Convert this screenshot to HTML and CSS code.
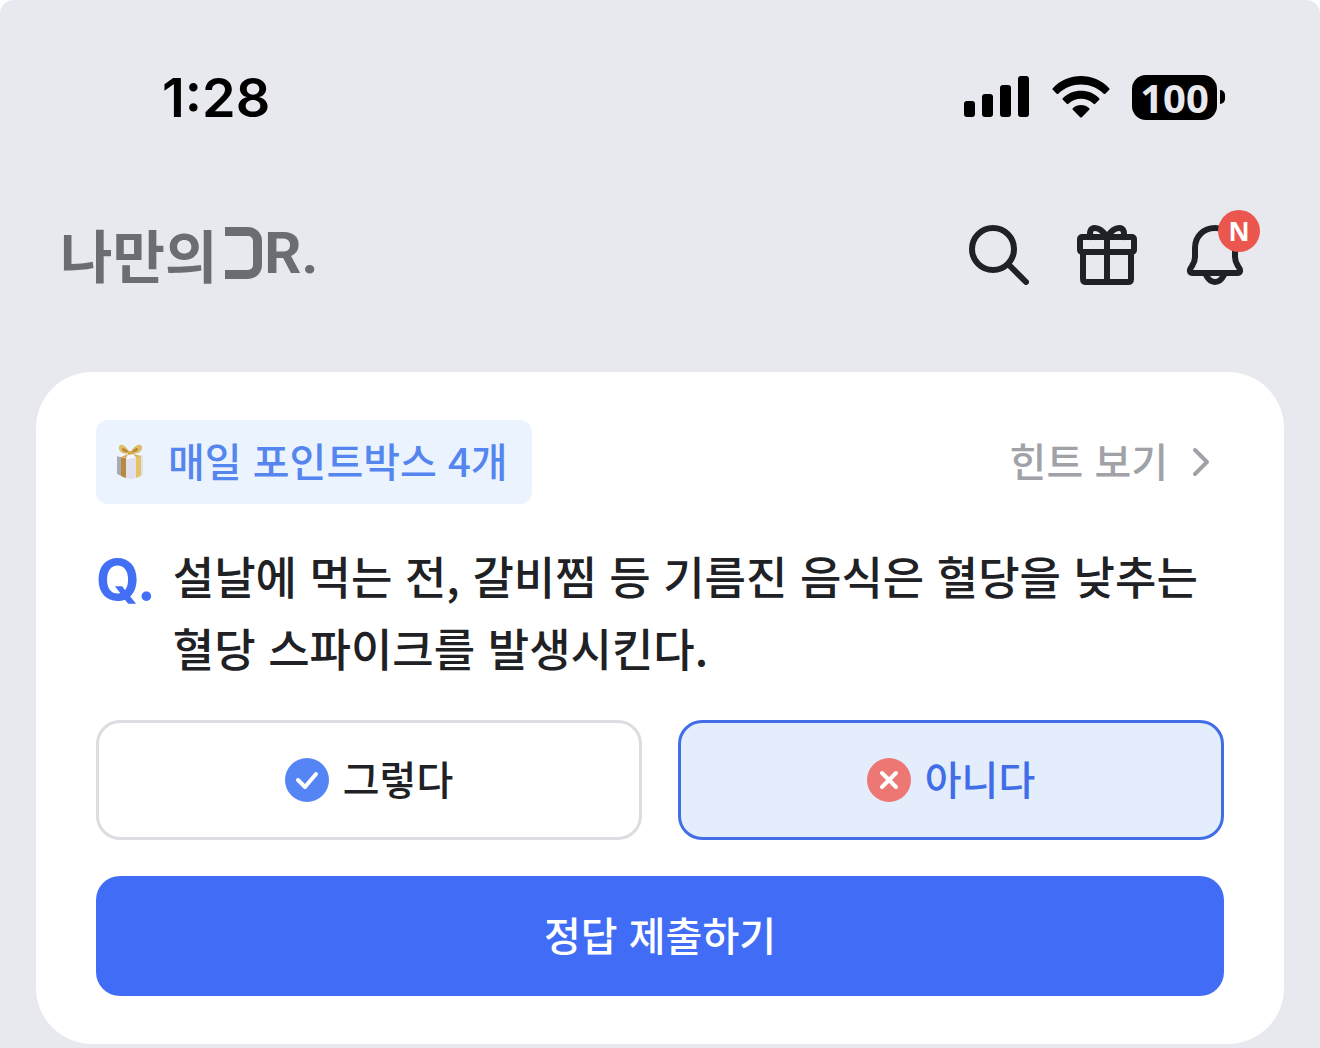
FILE: index.html
```html
<!DOCTYPE html>
<html lang="ko">
<head>
  <meta charset="UTF-8">
  <meta name="viewport" content="width=device-width, initial-scale=1.0">
  <title>나만의DR.</title>
  <link rel="stylesheet" href="styles.css">
</head>
<body>
  <div class="screen">
    <div class="status-bar">
      <time class="clock">1:28</time>
      <div class="status-icons">
        <svg class="signal" viewBox="0 0 66 42" aria-hidden="true">
          <rect x="0" y="25" width="11" height="16" rx="3"/>
          <rect x="18" y="18" width="11" height="23" rx="3"/>
          <rect x="36" y="9" width="11" height="32" rx="3"/>
          <rect x="54" y="0" width="11" height="41" rx="3"/>
        </svg>
        <svg class="wifi" viewBox="0 0 58 42" aria-hidden="true">
          <path d="M.8 12.2C16-4 42-4 57.2 12.2q.8.8 0 1.6l-3.9 3.9q-.8.8-1.6 0C39 5.500 19 5.500 6.300 17.700q-.8.8-1.600 0L.8 13.800q-.8-.8 0-1.600z"/>
          <path d="M10.800 22.200C20.500 12.300 37.500 12.300 47.200 22.200q.8.8 0 1.600l-4 4q-.8.8-1.600 0C34.500 21 23.500 21 16.400 27.800q-.8.8-1.600 0l-4-4q-.8-.8 0-1.600z"/>
          <path d="M20.800 32.200C25.500 27.800 32.500 27.800 37.200 32.200q.8.8 0 1.600L29.800 41.200q-.8.8-1.600 0L20.800 33.800q-.8-.8 0-1.600z"/>
        </svg>
        <div class="battery"><span class="battery-level">100</span></div>
      </div>
    </div>

    <header class="header">
      <a class="logo" href="#" aria-label="나만의DR.">
        <span>나만의</span>
        <span class="logo-mark"></span>
        <span class="logo-latin">R.</span>
      </a>
      <nav class="actions">
        <button type="button" class="icon-btn" aria-label="검색">
          <svg viewBox="0 0 60 60">
            <circle cx="24" cy="24" r="21"/>
            <path d="M40 40 57 57"/>
          </svg>
        </button>
        <button type="button" class="icon-btn" aria-label="선물">
          <svg viewBox="0 0 60 60">
            <rect x="3" y="12" width="54" height="15" rx="2"/>
            <path d="M6 27v27q0 3 3 3h42q3 0 3-3V27M30 12v45"/>
            <path d="M30 12C26 6 22 3 18 3c-5 0-6 5-4 9M30 12c4-6 8-9 12-9 5 0 6 5 4 9"/>
          </svg>
        </button>
        <button type="button" class="icon-btn" aria-label="알림">
          <svg viewBox="0 0 60 60">
            <path d="M30 3C18 3 10 12 10 23v9c0 4-1 6-3 9-3 4-3 7 1 7h44c4 0 4-3 1-7-2-3-3-5-3-9V23C50 12 42 3 30 3z"/>
            <path d="M21 50c2 4 5 7 9 7s7-3 9-7"/>
          </svg>
          <span class="badge">N</span>
        </button>
      </nav>
    </header>

    <main class="card">
      <div class="card-top">
        <div class="point-tag">
          <svg class="gift" viewBox="0 0 28 36" aria-hidden="true">
            <path fill="#aaa9b4" d="M1 12 10 14V34L1 30z"/>
            <path fill="#e2e0ee" d="M10 14 27 11V31L16 35 10 34z"/>
            <path fill="#b58c3d" d="M5 13 10 14V34L5 32z"/>
            <path fill="#e3c366" d="M20 12 25 11V32L20 34z"/>
            <path fill="#f6f5fb" d="M1 12 14 8 27 11 13 15z"/>
            <path fill="#dfbd66" d="M14 9C9 0 4-1 3 3c-1 5 5 8 11 6zM14 9C19 0 25-1 26 3c1 5-6 8-12 6z"/>
            <path fill="#b68a3c" d="M13 8C9 4 6 3 6 5s3 4 7 3zM15 8c4-4 7-5 7-3s-3 4-7 3z"/>
            <path fill="#d1aa50" d="M12 7h5l1 3-6 1zM12 10 5 13l5 1zM17 10l8 2-5 1z"/>
          </svg>
          <span>매일 포인트박스 4개</span>
        </div>
        <a class="hint" href="#">
          <span>힌트 보기</span>
          <svg viewBox="0 0 18 30" aria-hidden="true"><path d="M3 3 15 15 3 27"/></svg>
        </a>
      </div>

      <form class="quiz">
        <div class="question">
          <span class="q-mark">Q.</span>
          <p id="question-text">설날에 먹는 전, 갈비찜 등 기름진 음식은 혈당을 낮추는 혈당 스파이크를 발생시킨다.</p>
        </div>
        <div class="options" role="radiogroup" aria-labelledby="question-text">
          <label class="option">
            <input type="radio" name="answer" value="yes">
            <svg viewBox="0 0 44 44" aria-hidden="true">
              <circle cx="22" cy="22" r="22" fill="#5585f5"/>
              <path d="M13 22 20 29 31 16"/>
            </svg>
            <span>그렇다</span>
          </label>
          <label class="option">
            <input type="radio" name="answer" value="no" checked>
            <svg viewBox="0 0 44 44" aria-hidden="true">
              <circle cx="22" cy="22" r="22" fill="#ed7773"/>
              <path d="M15 15 29 29M29 15 15 29"/>
            </svg>
            <span>아니다</span>
          </label>
        </div>
        <button type="submit" class="submit">정답 제출하기</button>
      </form>
    </main>
  </div>
</body>
</html>
```
FILE: styles.css
```css
* {
  box-sizing: border-box;
}
body {
  margin: 0;
  background-color: #fff;
  color: #202125;
  font-family: "Noto Sans CJK KR", sans-serif;
  font-weight: 500;
}
button {
  padding: 0;
  border: none;
  background: none;
  color: inherit;
  font: inherit;
  cursor: pointer;
}
a {
  color: inherit;
  text-decoration: none;
}
svg {
  display: block;
  flex: none;
}
.screen {
  min-height: 100vh;
  padding: 62px 36px 4px;
  border-radius: 14px 14px 0 0;
  background-color: #e8e9ee;
}

/* status bar */
.status-bar {
  display: flex;
  justify-content: space-between;
  align-items: center;
  height: 70px;
  padding: 0 59px 0 126px;
  color: #000;
  font-family: Inter, sans-serif;
}
.clock {
  font-size: 54px;
  font-weight: 600;
}
.status-icons {
  display: flex;
  align-items: center;
  gap: 22px;
}
.signal {
  width: 66px;
  height: 42px;
}
.wifi {
  width: 58px;
  height: 42px;
}
.battery {
  display: flex;
  align-items: center;
  gap: 3px;
}
.battery::after {
  content: "";
  width: 5px;
  height: 14px;
  border-radius: 0 6px 6px 0;
  background-color: #000;
}
.battery-level {
  width: 85px;
  border-radius: 14px;
  background-color: #000;
  color: #e8e9ee;
  font-family: "Noto Sans", sans-serif;
  font-size: 40px;
  font-weight: 700;
  line-height: 45px;
  text-align: center;
}

/* header */
.header {
  display: flex;
  justify-content: space-between;
  align-items: center;
  height: 120px;
  margin: 63px 0 57px;
  padding: 0 39px 0 24px;
}
.logo {
  display: flex;
  align-items: center;
  gap: 8px;
  padding-bottom: 4px;
  color: #6b6d73;
  font-size: 57px;
  font-weight: 700;
  line-height: 60px;
}
.logo-mark {
  width: 37px;
  height: 52px;
  border: 9px solid #6b6d73;
  border-left: none;
  border-radius: 0 14px 14px 0;
}
.logo-latin {
  margin-left: -6px;
  font-family: "Liberation Sans Narrow", Roboto, sans-serif;
  font-size: 58px;
}
.actions {
  display: flex;
  gap: 48px;
}
.icon-btn {
  position: relative;
  width: 60px;
  height: 60px;
}
.icon-btn svg {
  fill: none;
  stroke: #202125;
  stroke-width: 6;
  stroke-linecap: round;
  stroke-linejoin: round;
}
.badge {
  position: absolute;
  top: -15px;
  right: -15px;
  width: 42px;
  height: 42px;
  border-radius: 50%;
  background-color: #eb564f;
  color: #fff;
  font-family: "Noto Sans", sans-serif;
  font-size: 26px;
  font-weight: 700;
  line-height: 42px;
  text-align: center;
}

/* quiz card */
.card {
  padding: 48px 60px;
  border-radius: 56px;
  background-color: #fff;
  font-size: 40px;
}
.card-top {
  display: flex;
  justify-content: space-between;
  align-items: center;
}
.point-tag {
  display: flex;
  align-items: center;
  gap: 24px;
  height: 84px;
  padding: 0 24px 0 20px;
  border-radius: 12px;
  background-color: #ebf4fe;
  color: #5585ee;
}
.point-tag span,
.hint span,
.option span {
  padding-bottom: 4px;
}
.gift {
  width: 28px;
  height: 36px;
}
.hint {
  display: flex;
  align-items: center;
  gap: 24px;
  padding-right: 14px;
  color: #a0a2a8;
}
.hint svg {
  width: 18px;
  height: 30px;
  fill: none;
  stroke: #a0a2a8;
  stroke-width: 4;
  stroke-linecap: round;
  stroke-linejoin: round;
}
.question {
  display: flex;
  gap: 17px;
  margin: 36px 0;
  font-size: 45px;
  line-height: 72px;
}
.question p {
  margin: 0;
  word-break: keep-all;
}
.q-mark {
  color: #436ff5;
  font-family: Inter, sans-serif;
  font-size: 56px;
  font-weight: 700;
  line-height: 80px;
}
.options {
  display: grid;
  grid-template-columns: 1fr 1fr;
  gap: 36px;
  margin-bottom: 36px;
}
.option {
  display: flex;
  justify-content: center;
  align-items: center;
  gap: 14px;
  height: 120px;
  border: 3px solid #dcdde1;
  border-radius: 24px;
  cursor: pointer;
}
.option input {
  position: absolute;
  opacity: 0;
}
.option svg {
  width: 44px;
  height: 44px;
}
.option path {
  fill: none;
  stroke: #fff;
  stroke-width: 4;
  stroke-linecap: round;
  stroke-linejoin: round;
}
.option:has(input:checked) {
  border-color: #416de7;
  background-color: #e4edfc;
  color: #416de7;
}
.submit {
  width: 100%;
  height: 120px;
  padding-bottom: 4px;
  border-radius: 24px;
  background-color: #416df6;
  color: #fff;
}
```
